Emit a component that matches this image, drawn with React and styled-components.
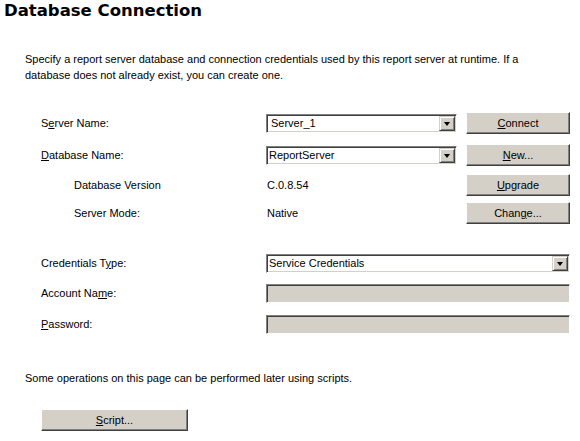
import React from "react";
import styled, { createGlobalStyle } from "styled-components";

const Global = createGlobalStyle`
  html, body {
    margin: 0;
    padding: 0;
    background: #fff;
  }
  body {
    font-family: "Liberation Sans", Arial, sans-serif;
    font-size: 11px;
    color: #000;
  }
`;

const Page = styled.div`
  width: 580px;
  height: 441px;
  overflow: hidden;
`;

const Title = styled.h1`
  margin: 0;
  padding: 0 0 0 4px;
  font-family: "DejaVu Sans", Verdana, sans-serif;
  font-weight: bold;
  font-size: 16.5px;
  line-height: 21px;
  color: #000;
`;

const Intro = styled.p`
  margin: 30px 0 0 25px;
  width: 520px;
  line-height: 16px;
`;

const Form = styled.div`
  margin-top: 29px;
  padding-left: 41px;
  display: flex;
  flex-direction: column;
`;

const Row = styled.div`
  display: flex;
  align-items: center;
  height: 22px;
  margin-top: ${(p) => p.$gap || 0}px;
`;

const Label = styled.div`
  width: 225px;
  padding-left: ${(p) => (p.$indent ? 33 : 0)}px;
  box-sizing: border-box;
  flex-shrink: 0;
`;

const Value = styled.div`
  width: 200px;
  padding-left: 1px;
  box-sizing: border-box;
`;

const Combo = styled.div`
  width: ${(p) => p.$width}px;
  height: 19px;
  box-sizing: border-box;
  display: flex;
  align-items: stretch;
  background: #fff;
  border-top: 1px solid #808080;
  border-left: 1px solid #808080;
  border-right: 1px solid #fff;
  border-bottom: 1px solid #fff;
  box-shadow: inset 1px 1px 0 #404040, inset -1px -1px 0 #d4d0c8;
`;

const ComboText = styled.div`
  flex: 1;
  padding: 0 0 0 ${(p) => (p.$pad ? 4 : 2)}px;
  line-height: 17px;
  white-space: nowrap;
  overflow: hidden;
`;

const ArrowBox = styled.div`
  width: 16px;
  margin: 1px 1px 1px 0;
  background: #d4d0c8;
  box-sizing: border-box;
  border-top: 1px solid #d4d0c8;
  border-left: 1px solid #d4d0c8;
  border-right: 1px solid #404040;
  border-bottom: 1px solid #404040;
  box-shadow: inset 1px 1px 0 #fff, inset -1px -1px 0 #808080;
  display: flex;
  align-items: center;
  justify-content: center;
`;

const Triangle = styled.div`
  width: 0;
  height: 0;
  border-left: 3.5px solid transparent;
  border-right: 3.5px solid transparent;
  border-top: 4px solid #000;
  margin-top: 1px;
`;

const TextBox = styled.div`
  width: 304px;
  height: 19px;
  box-sizing: border-box;
  background: #d4d0c8;
  border-top: 1px solid #808080;
  border-left: 1px solid #808080;
  border-right: 1px solid #fff;
  border-bottom: 1px solid #fff;
  box-shadow: inset 1px 1px 0 #404040;
`;

const Button = styled.button`
  width: ${(p) => p.$width || 104}px;
  height: 22px;
  margin-left: ${(p) => p.$offset || 0}px;
  box-sizing: border-box;
  padding: 0;
  background: #d4d0c8;
  font-family: "Liberation Sans", Arial, sans-serif;
  font-size: 11px;
  color: #000;
  border-top: 1px solid #fff;
  border-left: 1px solid #fff;
  border-right: 1px solid #404040;
  border-bottom: 1px solid #404040;
  box-shadow: inset -1px -1px 0 #808080;
  text-align: center;
`;

const Note = styled.p`
  margin: 35px 0 0 25px;
  line-height: 16px;
`;

const Footer = styled.div`
  margin-top: 23px;
  padding-left: 41px;
`;

const Key = styled.span`
  text-decoration: underline;
`;

const DropDown = ({ width, value, pad }) => (
  <Combo $width={width}>
    <ComboText $pad={pad}>{value}</ComboText>
    <ArrowBox>
      <Triangle />
    </ArrowBox>
  </Combo>
);

export default function App() {
  return (
    <Page>
      <Global />
      <Title>Database Connection</Title>
      <Intro>
        Specify a report server database and connection credentials used by
        this report server at runtime. If a database does not already exist,
        you can create one.
      </Intro>
      <Form>
        <Row>
          <Label>
            S<Key>e</Key>rver Name:
          </Label>
          <DropDown width={191} value="Server_1" pad />
          <Button $offset={9}>
            <Key>C</Key>onnect
          </Button>
        </Row>
        <Row $gap={10}>
          <Label>
            <Key>D</Key>atabase Name:
          </Label>
          <DropDown width={191} value="ReportServer" />
          <Button $offset={9}>
            <Key>N</Key>ew...
          </Button>
        </Row>
        <Row $gap={8}>
          <Label $indent>Database Version</Label>
          <Value>C.0.8.54</Value>
          <Button>
            <Key>U</Key>pgrade
          </Button>
        </Row>
        <Row $gap={6}>
          <Label $indent>Server Mode:</Label>
          <Value>Native</Value>
          <Button>
            Chan<Key>g</Key>e...
          </Button>
        </Row>
        <Row $gap={28}>
          <Label>
            Credentials T<Key>y</Key>pe:
          </Label>
          <DropDown width={304} value="Service Credentials" />
        </Row>
        <Row $gap={8}>
          <Label>
            Account Na<Key>m</Key>e:
          </Label>
          <TextBox />
        </Row>
        <Row $gap={9}>
          <Label>
            <Key>P</Key>assword:
          </Label>
          <TextBox />
        </Row>
      </Form>
      <Note>Some operations on this page can be performed later using scripts.</Note>
      <Footer>
        <Button $width={147}>
          <Key>S</Key>cript...
        </Button>
      </Footer>
    </Page>
  );
}
